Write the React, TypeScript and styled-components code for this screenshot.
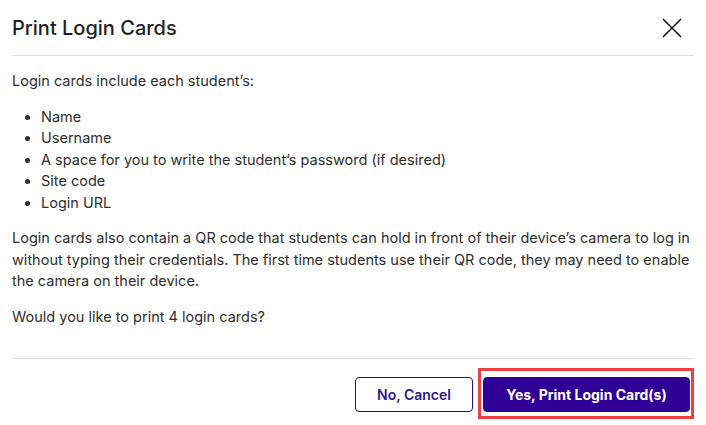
import * as React from 'react';
import styled, { createGlobalStyle } from 'styled-components';

const GlobalStyle = createGlobalStyle`
    body {
        margin: 0;
        background: #ffffff;
        font-family: Inter, "Noto Sans", sans-serif;
    }
`;

const Dialog = styled.div`
    width: 706px;
    height: 425px;
    box-sizing: border-box;
    padding: 0 12px;
    display: flex;
    flex-direction: column;
    background: #ffffff;
`;

const Header = styled.div`
    height: 55px;
    display: flex;
    align-items: center;
    justify-content: space-between;
    border-bottom: 1px solid #dedede;
`;

const Title = styled.h2`
    margin: 0;
    font-size: 20px;
    font-weight: 500;
    color: #1f1f1f;
`;

const CloseButton = styled.button`
    border: none;
    background: none;
    padding: 0;
    margin-right: 11px;
    width: 22px;
    height: 22px;
    display: flex;
    align-items: center;
    justify-content: center;
    cursor: pointer;
`;

const Body = styled.div`
    flex: 1;
    padding-top: 14px;
    font-size: 14.5px;
    line-height: 21.5px;
    color: #2e2e2e;
`;

const Text = styled.p`
    margin: 0 0 14px;
`;

const List = styled.ul`
    margin: 0 0 14px;
    padding-left: 29px;
`;

const Footer = styled.div`
    border-top: 1px solid #dedede;
    display: flex;
    justify-content: flex-end;
    align-items: flex-start;
    gap: 5px;
    padding: 9px 0 6px;
`;

const Button = styled.button<{ $primary?: boolean; $width: number }>`
    width: ${(p) => p.$width}px;
    height: 35px;
    box-sizing: border-box;
    border-radius: 4px;
    font-family: Inter, "Noto Sans", sans-serif;
    font-size: 14px;
    font-weight: ${(p) => (p.$primary ? 700 : 600)};
    padding: 0;
    border: 1px solid #2a0a85;
    background: ${(p) => (p.$primary ? '#2f0095' : '#ffffff')};
    color: ${(p) => (p.$primary ? '#ffffff' : '#2a1a85')};
    cursor: pointer;
`;

const Highlight = styled.div`
    border: 3px solid #ef3f42;
    padding: 6px 1px 4px 2px;
    display: flex;
`;

const CancelSlot = styled.div`
    padding-top: 9px;
`;

const App = () => {
    return (
        <>
            <GlobalStyle />
            <Dialog>
                <Header>
                    <Title>Print Login Cards</Title>
                    <CloseButton aria-label="Close">
                        <svg width="20" height="20" viewBox="0 0 20 20">
                            <path d="M1 1 L19 19 M19 1 L1 19" stroke="#111" strokeWidth="1.6" />
                        </svg>
                    </CloseButton>
                </Header>
                <Body>
                    <Text>Login cards include each student’s:</Text>
                    <List>
                        <li>Name</li>
                        <li>Username</li>
                        <li>A space for you to write the student’s password (if desired)</li>
                        <li>Site code</li>
                        <li>Login URL</li>
                    </List>
                    <Text>
                        Login cards also contain a QR code that students can hold in front of their device’s camera to log in
                        without typing their credentials. The first time students use their QR code, they may need to enable
                        the camera on their device.
                    </Text>
                    <Text>Would you like to print 4 login cards?</Text>
                </Body>
                <Footer>
                    <CancelSlot>
                        <Button $width={118}>No, Cancel</Button>
                    </CancelSlot>
                    <Highlight>
                        <Button $primary $width={207}>Yes, Print Login Card(s)</Button>
                    </Highlight>
                </Footer>
            </Dialog>
        </>
    );
};

export default App;
